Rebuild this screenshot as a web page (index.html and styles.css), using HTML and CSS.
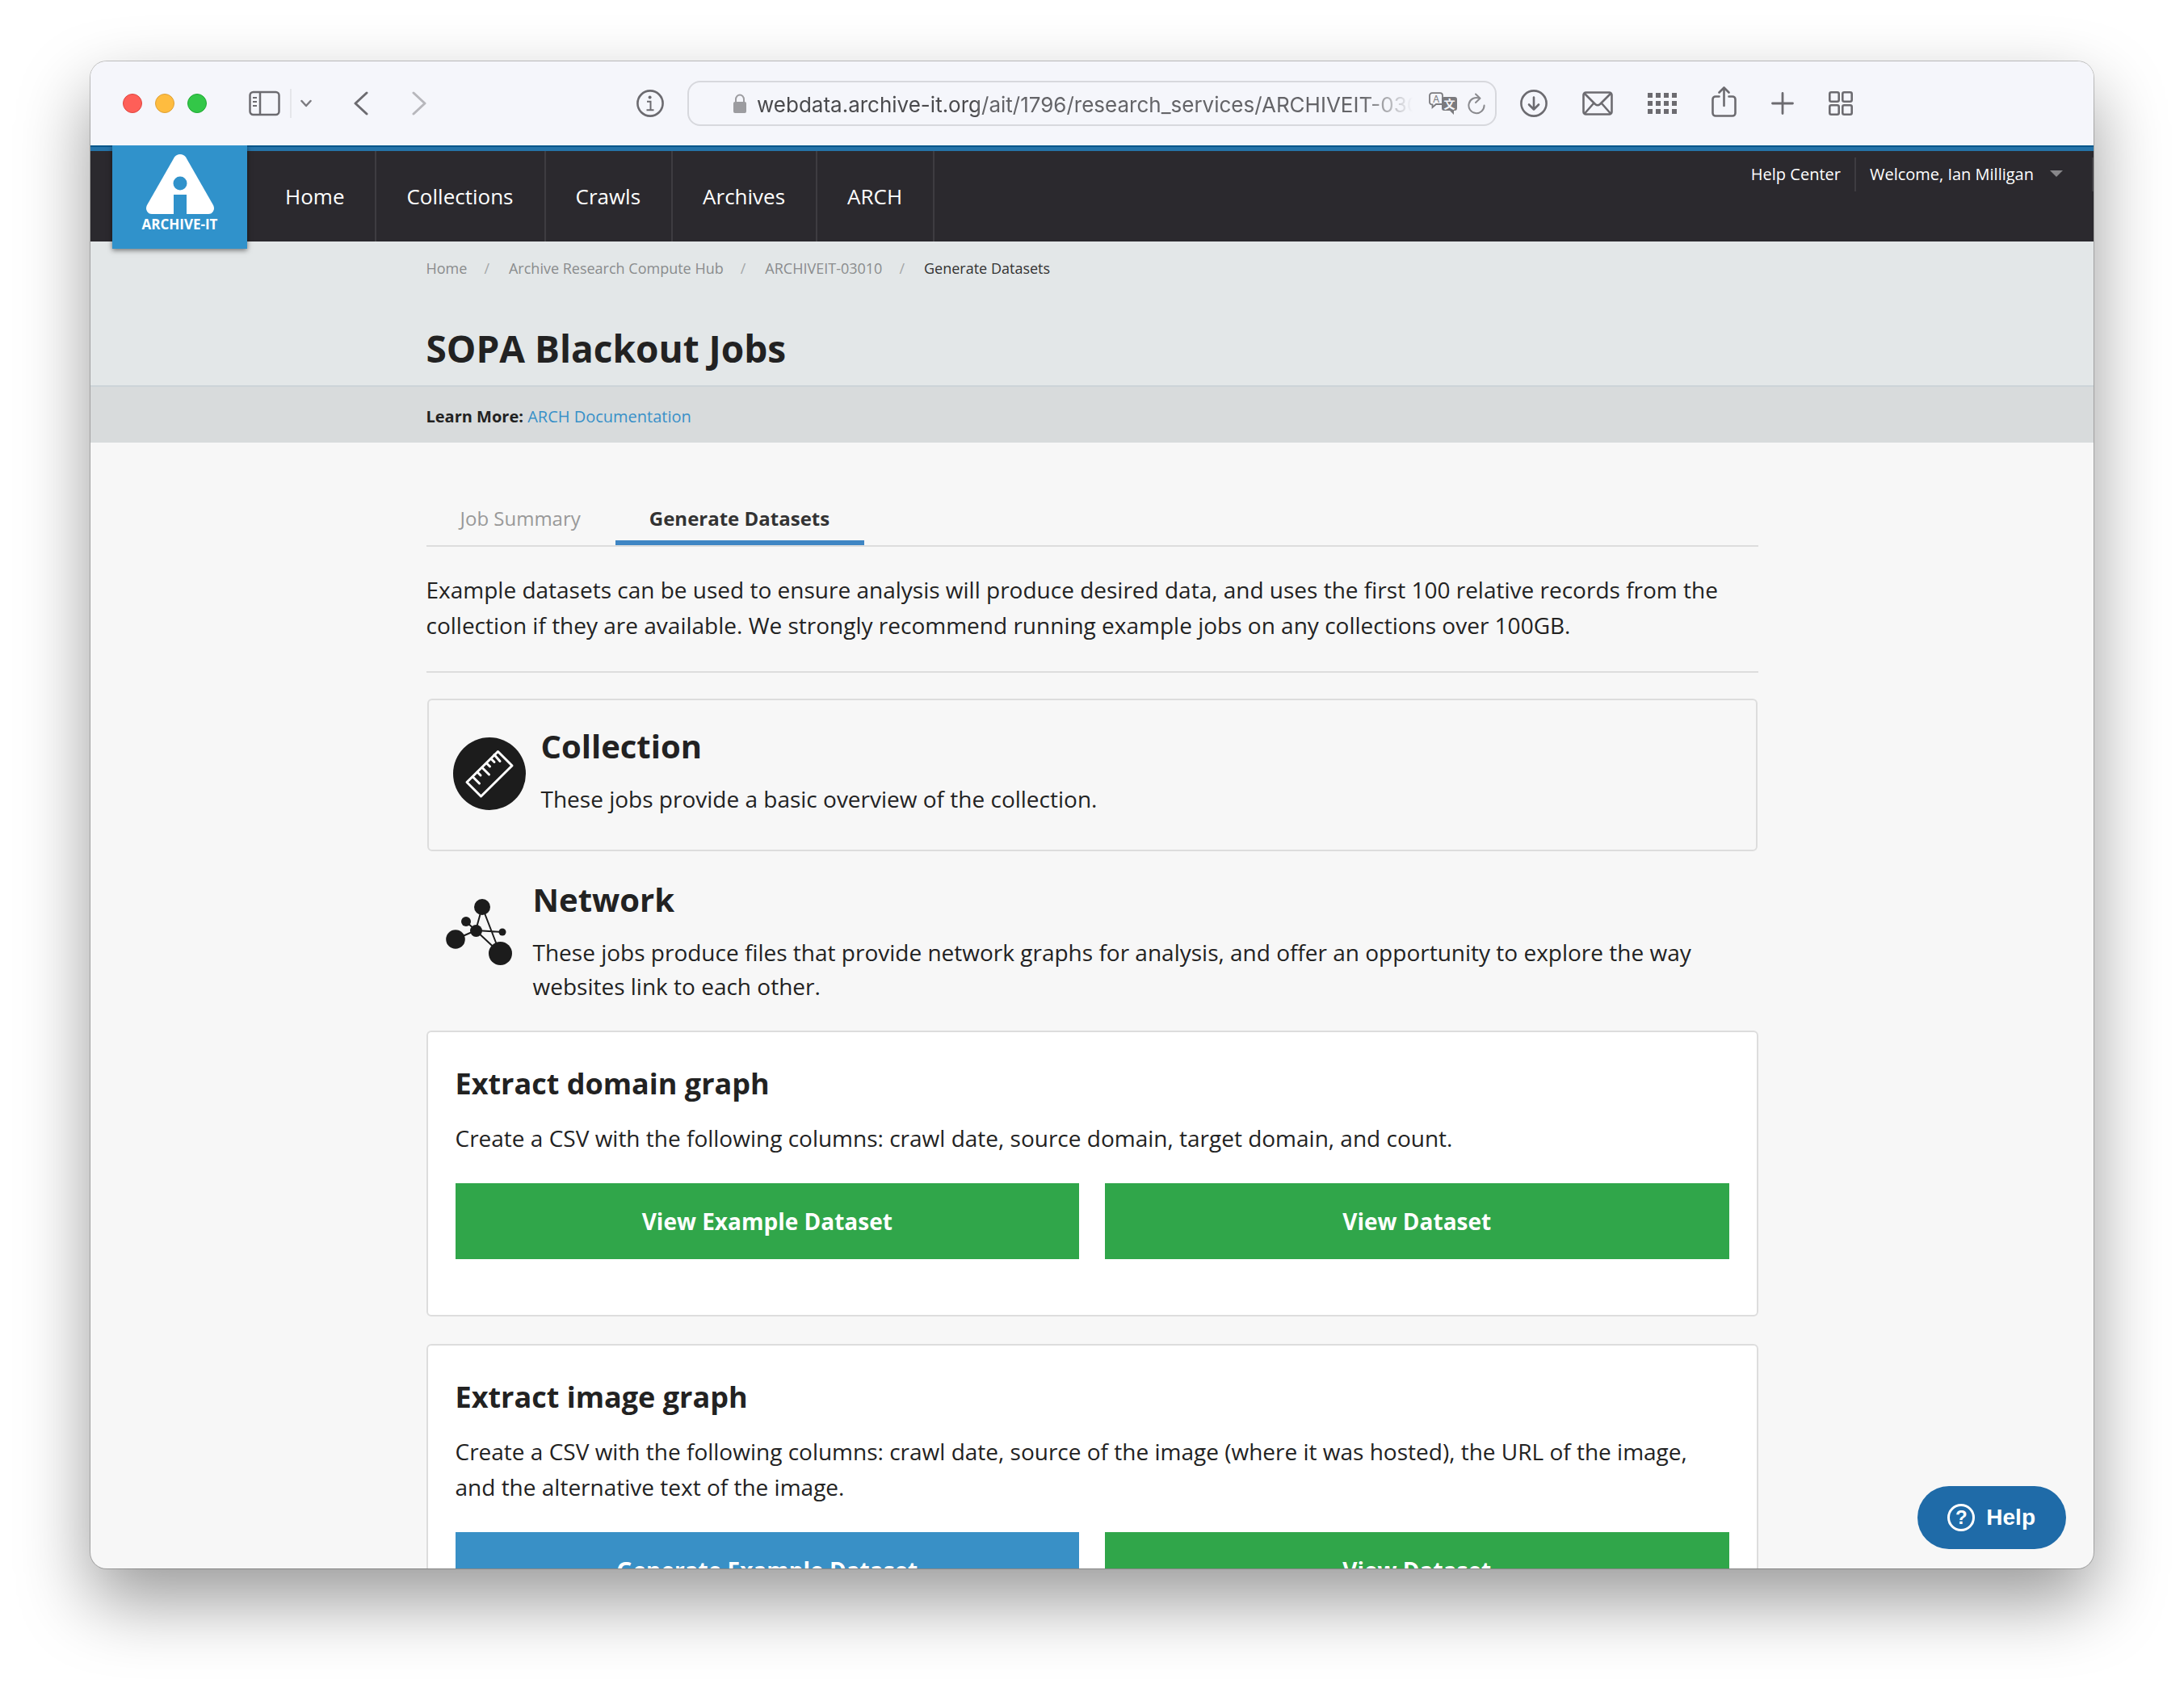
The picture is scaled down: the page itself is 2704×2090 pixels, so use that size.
FILE: index.html
```html
<!DOCTYPE html>
<html lang="en">
<head>
<meta charset="utf-8">
<title>SOPA Blackout Jobs</title>
<link rel="stylesheet" href="styles.css">
</head>
<body>
<div class="window">
  <div class="toolbar">
    <div class="toolbar-left">
      <div class="lights">
        <button class="light light-close" aria-label="Close"></button>
        <button class="light light-min" aria-label="Minimize"></button>
        <button class="light light-max" aria-label="Zoom"></button>
      </div>
      <div class="sidebar-tools">
        <button class="icon-btn" aria-label="Sidebar">
          <svg width="40" height="32" viewBox="0 0 40 32" fill="none" stroke="#6c6b70" stroke-width="2.500"><rect x="1.500" y="2" width="36" height="28" rx="4"/><path d="M14 2v28"/><path d="M5 9h5M5 14h5M5 19h5" stroke-width="2"/></svg>
        </button>
        <span class="tool-sep"></span>
        <button class="icon-btn" aria-label="Tab groups">
          <svg width="14" height="10" viewBox="0 0 14 10" fill="none" stroke="#7c7b80" stroke-width="2.500" stroke-linecap="round" stroke-linejoin="round"><path d="M1.500 2L7 8l5.500-6"/></svg>
        </button>
      </div>
      <div class="history">
        <button class="icon-btn" aria-label="Back">
          <svg width="18" height="30" viewBox="0 0 18 30" fill="none" stroke="#6c6b70" stroke-width="3" stroke-linecap="round" stroke-linejoin="round"><path d="M16 2L2 15l14 13"/></svg>
        </button>
        <button class="icon-btn" aria-label="Forward">
          <svg width="18" height="30" viewBox="0 0 18 30" fill="none" stroke="#b7b7bc" stroke-width="3" stroke-linecap="round" stroke-linejoin="round"><path d="M2 2l14 13L2 28"/></svg>
        </button>
      </div>
      <button class="icon-btn info" aria-label="Page information">
        <svg width="34" height="34" viewBox="0 0 34 34" fill="none" stroke="#6c6b70" stroke-width="2"><circle cx="17" cy="17" r="15.600" stroke-width="2.600"/><circle cx="16.600" cy="9.600" r="2" fill="#6c6b70" stroke="none"/><path d="M13 14.800h4.500V25M12.500 25.300h9" /></svg>
      </button>
    </div>
    <div class="address">
      <svg class="lock" width="18" height="24" viewBox="0 0 18 24"><rect x="1" y="10" width="16" height="14" rx="2" fill="#9c9ca0"/><path d="M4 11V7a5 5.500 0 0 1 10 0v4" fill="none" stroke="#9c9ca0" stroke-width="2"/></svg>
      <input class="url" type="text" aria-label="Address" value="webdata.archive-it.org/ait/1796/research_services/ARCHIVEIT-03010">
      <button class="icon-btn" aria-label="Translate">
        <svg width="36" height="28" viewBox="0 0 36 28"><path d="M4 1.200h10a3 3 0 0 1 3 3V15H9l-4.500 4V15.500H4a3 3 0 0 1-3-3V4.200a3 3 0 0 1 3-3z" fill="none" stroke="#7a7a7e" stroke-width="1.800"/><text x="5" y="13" font-family="Inter" font-size="12" fill="#7a7a7e">A</text><path d="M19 6h13a3 3 0 0 1 3 3v11a3 3 0 0 1-3 3h-1v5l-5-5h-7a3 3 0 0 1-3-3V9a3 3 0 0 1 3-3z" fill="#7a7a7e"/><text x="18.500" y="20" font-family="Noto Sans CJK SC" font-weight="700" font-size="14" fill="#f5f6fb">文</text></svg>
      </button>
      <button class="icon-btn" aria-label="Reload">
        <svg width="22" height="27" viewBox="0 0 22 27" fill="none" stroke="#8a8a8e" stroke-width="2" stroke-linecap="round" stroke-linejoin="round"><path d="M14.500 6.600A9.600 9.600 0 1 0 20.600 15.500"/><path d="M10 1.500l5.500 5.200-5.500 5.300"/></svg>
      </button>
    </div>
    <div class="toolbar-right">
      <button class="icon-btn" aria-label="Downloads">
        <svg width="34" height="34" viewBox="0 0 34 34" fill="none" stroke="#6c6b70" stroke-width="2.600" stroke-linecap="round" stroke-linejoin="round"><circle cx="17" cy="17" r="15.600"/><path d="M17 9.500v15M11 18.500l6 6 6-6"/></svg>
      </button>
      <button class="icon-btn" aria-label="Mail">
        <svg width="38" height="30" viewBox="0 0 38 30" fill="none" stroke="#6c6b70" stroke-width="2.600" stroke-linejoin="round"><rect x="1.500" y="1.500" width="35" height="27" rx="3"/><path d="M3 3l13 13q3 2.500 6 0L35 3M3 27.500L14 15M35 27.500L24 15"/></svg>
      </button>
      <button class="icon-btn" aria-label="Apps">
        <svg width="36" height="26" viewBox="0 0 36 26" fill="none" stroke="#6c6b70" stroke-width="6" stroke-dasharray="6 4"><path d="M0 3h36M0 13h36M0 23h36"/></svg>
      </button>
      <button class="icon-btn share" aria-label="Share">
        <svg width="31" height="38" viewBox="0 0 31 38" fill="none" stroke="#6c6b70" stroke-width="2.600" stroke-linecap="round" stroke-linejoin="round"><path d="M9.500 12.500H5a3.500 3.500 0 0 0-3.500 3.500v17A3.500 3.500 0 0 0 5 36.500h21a3.500 3.500 0 0 0 3.500-3.500V16a3.500 3.500 0 0 0-3.500-3.500h-4.500M15.500 24V2M9.500 7.500l6-6 6 6"/></svg>
      </button>
      <button class="icon-btn" aria-label="New tab">
        <svg width="28" height="28" viewBox="0 0 28 28" fill="none" stroke="#6c6b70" stroke-width="2.800" stroke-linecap="round"><path d="M14 1.500v25M1.500 14h25"/></svg>
      </button>
      <button class="icon-btn" aria-label="Tab overview">
        <svg width="30" height="30" viewBox="0 0 30 30" fill="none" stroke="#6c6b70" stroke-width="2.600"><rect x="1.300" y="1.300" width="11.400" height="11.400" rx="2"/><rect x="17.300" y="1.300" width="11.400" height="11.400" rx="2"/><rect x="1.300" y="17.300" width="11.400" height="11.400" rx="2"/><rect x="17.300" y="17.300" width="11.400" height="11.400" rx="2"/></svg>
      </button>
    </div>
  </div>

  <div class="viewport">
    <header class="site-header">
      <a class="logo" href="#">
        <svg width="86" height="76" viewBox="0 0 86 76"><path d="M8 75h70q4 0 6-3.500t0-7.500L50 4.500Q47.500 1 43 1t-7 3.500L2 64q-2 4 0 7.500T8 75z" fill="#fff"/><circle cx="43" cy="37" r="8.500" fill="#3092cb"/><path d="M35 76V51h16v25z" fill="#3092cb"/></svg>
        <span class="logo-name">ARCHIVE-IT</span>
      </a>
      <nav class="main-nav">
        <a href="#">Home</a>
        <a href="#">Collections</a>
        <a href="#">Crawls</a>
        <a href="#">Archives</a>
        <a href="#">ARCH</a>
      </nav>
      <div class="user-nav">
        <a href="#">Help Center</a>
        <a href="#">Welcome, Ian Milligan <span class="caret"></span></a>
      </div>
    </header>

    <section class="hero">
      <div class="container">
        <ol class="crumbs">
          <li><a href="#">Home</a></li>
          <li><a href="#">Archive Research Compute Hub</a></li>
          <li><a href="#">ARCHIVEIT-03010</a></li>
          <li class="current">Generate Datasets</li>
        </ol>
        <h1>SOPA Blackout Jobs</h1>
      </div>
    </section>
    <section class="learn">
      <div class="container"><strong>Learn More:</strong> <a href="#">ARCH Documentation</a></div>
    </section>

    <main class="container main">
      <div class="tabs">
        <a class="tab" href="#">Job Summary</a>
        <a class="tab tab-active" href="#">Generate Datasets</a>
      </div>
      <p class="intro">Example datasets can be used to ensure analysis will produce desired data, and uses the first 100 relative records from the collection if they are available. We strongly recommend running example jobs on any collections over 100GB.</p>
      <div class="sections">
        <section class="group group-boxed">
          <svg class="group-icon" width="90" height="90" viewBox="0 0 90 90" fill="none" stroke="#fff" stroke-width="3" stroke-linecap="round" stroke-linejoin="round"><circle cx="45" cy="45" r="45" fill="#1c1c1c" stroke="none"/><path d="M55.500 17.500L73 35 34.500 73 17 55.500z"/><path d="M24.500 49l8 8M30 43l4 4M36 37.500l8.500 8.500M41.500 32l4 4M47 26.500l4 4M51 21.500l7 8" /></svg>
          <div>
            <h2>Collection</h2>
            <p>These jobs provide a basic overview of the collection.</p>
          </div>
        </section>
        <section class="group">
          <svg class="group-icon" width="82" height="82" viewBox="0 0 82 82" fill="#1c1c1c" stroke="#1c1c1c" stroke-width="2"><path d="M45 10L37 39 12 50M45 10l22 57L37 39 25 28M37 39l33 2" fill="none"/><g stroke="none"><circle cx="45" cy="10" r="10"/><circle cx="25" cy="28" r="6"/><circle cx="37.500" cy="39.500" r="7.500"/><circle cx="70" cy="41" r="4.500"/><circle cx="12" cy="50" r="11.800"/><circle cx="67.500" cy="67.500" r="14.500"/></g></svg>
          <div>
            <h2>Network</h2>
            <p>These jobs produce files that provide network graphs for analysis, and offer an opportunity to explore the way websites link to each other.</p>
          </div>
        </section>
        <article class="card">
          <h3>Extract domain graph</h3>
          <p>Create a CSV with the following columns: crawl date, source domain, target domain, and count.</p>
          <div class="actions">
            <button class="btn btn-view">View Example Dataset</button>
            <button class="btn btn-view">View Dataset</button>
          </div>
        </article>
        <article class="card">
          <h3>Extract image graph</h3>
          <p>Create a CSV with the following columns: crawl date, source of the image (where it was hosted), the URL of the image, and the alternative text of the image.</p>
          <div class="actions">
            <button class="btn btn-generate">Generate Example Dataset</button>
            <button class="btn btn-view">View Dataset</button>
          </div>
        </article>
      </div>
    </main>
    <button class="help"><span class="help-mark">?</span>Help</button>
  </div>
</div>
</body>
</html>
```
FILE: styles.css
```css
* { box-sizing: border-box; }

body {
  margin: 0;
  height: 100vh;
  padding: 76px 112px 148px;
  overflow: hidden;
  background: #fff;
  color: #222;
  font-family: "Open Sans", sans-serif;
  font-size: 28px;
  line-height: 44px;
}

h1, h2, h3, p, ol { margin: 0; padding: 0; }
a { color: inherit; text-decoration: none; }
button { border: 0; padding: 0; font: inherit; }
svg { display: block; }

.window {
  display: flex;
  flex-direction: column;
  height: 100%;
  overflow: hidden;
  border-radius: 20px;
  background: #f7f7f7;
  box-shadow: 0 0 0 1px rgba(0, 0, 0, .22), 0 40px 88px rgba(0, 0, 0, .4);
}

/* browser toolbar */
.toolbar {
  display: grid;
  grid-template-columns: 1fr minmax(0, 1002px) 1fr;
  align-items: center;
  flex: none;
  height: 104px;
  background: #f5f6fb;
}
.toolbar-left { display: flex; align-items: center; padding: 0 29px 0 40px; }
.lights { display: flex; gap: 16px; }
.light { width: 24px; height: 24px; border-radius: 50%; border: 1px solid; }
.light-close { background: #fe5f58; border-color: #e0443e; }
.light-min { background: #febc3f; border-color: #dea034; }
.light-max { background: #33c748; border-color: #1fa833; }
.icon-btn { display: block; background: none; }
.sidebar-tools { display: flex; align-items: center; gap: 11px; margin-left: 52px; }
.tool-sep { width: 2px; height: 36px; background: #e5e6ea; }
.history { display: flex; gap: 54px; margin-left: 52px; }
.info { margin-left: auto; }
.address {
  display: flex;
  align-items: center;
  gap: 12px;
  height: 56px;
  padding: 0 12px 0 54px;
  border: 2px solid #d7d8dd;
  border-radius: 16px;
}
.lock { flex: none; }
.url {
  flex: 1;
  min-width: 0;
  height: 48px;
  margin-right: 8px;
  padding: 2px 0 0;
  border: 0;
  outline: 0;
  background: none;
  color: #4a4a4d;
  font: 26px/44px Inter, sans-serif;
  -webkit-mask-image: linear-gradient(90deg, #000 274px, rgba(0, 0, 0, .85) 274px, rgba(0, 0, 0, .85) calc(100% - 64px), transparent);
  mask-image: linear-gradient(90deg, #000 274px, rgba(0, 0, 0, .85) 274px, rgba(0, 0, 0, .85) calc(100% - 64px), transparent);
}
.toolbar-right { display: flex; align-items: center; gap: 43px; padding-left: 29px; }
.share { padding-bottom: 4px; }

/* site header */
.viewport { position: relative; flex: 1; min-height: 0; overflow: hidden; }
.site-header {
  position: relative;
  display: flex;
  height: 119px;
  padding-left: 27px;
  background: linear-gradient(#04568a 2px, #2573a8 2px, #2573a8 7px, #2b292e 7px);
  color: #fff;
}
.logo {
  display: flex;
  flex-direction: column;
  align-items: center;
  width: 167px;
  height: 128px;
  padding-top: 10px;
  background: #3092cb;
  box-shadow: 0 2px 6px rgba(0, 0, 0, .5);
}
.logo-name { font-size: 17px; font-weight: 700; line-height: 24px; }
.main-nav { display: flex; padding-left: 10px; margin-top: 7px; }
.main-nav a {
  display: flex;
  align-items: center;
  padding: 0 38px 0 37px;
  border-right: 2px solid #3e3c41;
  font-size: 26px;
}
.user-nav { display: flex; align-items: flex-start; margin: 15px 0 0 auto; }
.user-nav a {
  display: flex;
  align-items: center;
  height: 42px;
  padding: 0 17px;
  border-right: 2px solid #3e3c41;
  font-size: 20px;
}
.user-nav a:last-child { padding-right: 36px; }
.caret {
  margin: 0 0 2px 20px;
  border: 8px solid transparent;
  border-top-color: #88878a;
  border-bottom: 0;
}

/* page heading */
.container { width: 1649px; max-width: 100%; margin: 0 auto; }
.hero { padding: 21px 0 16px; background: #e3e7e8; }
.crumbs { display: flex; list-style: none; font-size: 18px; line-height: 24px; color: #8a8c8d; }
.crumbs li + li::before { content: "/"; padding: 0 24px 0 21px; color: #a5a7a8; }
.crumbs .current { color: #333; }
h1 { margin-top: 57px; font-size: 46px; line-height: 60px; }
.learn {
  padding: 23px 0 18px;
  border-top: 2px solid #ccd4d8;
  background: #d8dbdc;
  font-size: 20px;
  line-height: 28px;
}
.learn a { color: #3790c8; }

/* tabs and content */
.main { padding-top: 60px; }
.tabs { display: flex; border-bottom: 2px solid #ddd; }
.tab {
  padding: 16px 43px 9px 42px;
  border-bottom: 6px solid transparent;
  color: #999;
  font-size: 24px;
  line-height: 36px;
}
.tab-active { border-color: #3f86c4; color: #333; font-weight: 700; }
.intro { padding: 31px 0 35px; border-bottom: 2px solid #ddd; }
.sections { display: flex; flex-direction: column; gap: 34px; padding: 32px 0; }

.group { display: flex; gap: 26px; padding-left: 24px; line-height: 42px; }
.group-icon { flex: none; margin-top: 25px; }
.group-boxed { gap: 19px; margin: 0 1px; padding: 31px 30px 42px; border: 2px solid #ddd; border-radius: 6px; }
.group-boxed .group-icon { margin-top: 15px; }
h2 { margin-bottom: 18px; font-size: 40px; line-height: 52px; }

.card { padding: 40px 34px 69px; border: 2px solid #ddd; border-radius: 6px; background: #fff; }
h3 { margin-bottom: 21px; font-size: 36px; line-height: 48px; }
.actions { display: grid; grid-template-columns: 1fr 1fr; gap: 32px; margin-top: 34px; }
.btn { height: 94px; color: #fff; font-weight: 700; }
.btn-view { background: #30a64a; }
.btn-generate { background: #3990c6; }

.help {
  position: absolute;
  right: 34px;
  bottom: 24px;
  display: flex;
  align-items: center;
  gap: 14px;
  height: 78px;
  padding: 0 38px 0 37px;
  border-radius: 39px;
  background: #1f6ba8;
  color: #fff;
  font: 700 28px/40px "Liberation Sans", sans-serif;
}
.help-mark {
  width: 34px;
  height: 34px;
  border: 3px solid #fff;
  border-radius: 50%;
  font-size: 24px;
  line-height: 28px;
  text-align: center;
}
```
